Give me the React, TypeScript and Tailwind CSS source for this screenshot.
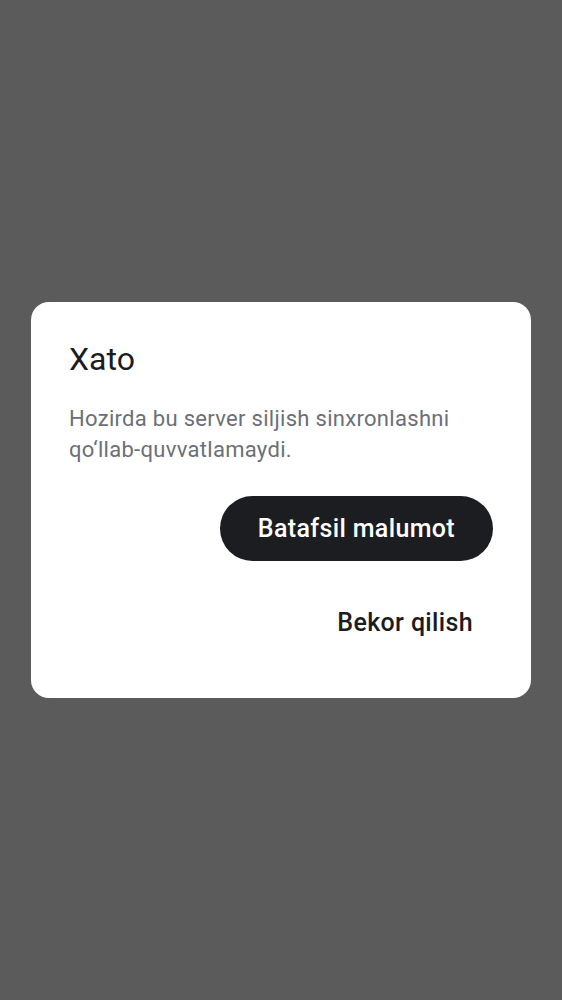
export default function App() {
  return (
    <div
      className="flex h-[1000px] w-full items-start justify-center bg-[#5b5b5b] pt-[302px]"
      style={{ fontFamily: "Roboto, 'Noto Sans', sans-serif" }}
    >
      <div className="w-[500px] rounded-[18px] bg-white px-[38px] pt-[37px] pb-[43px]">
        <h2 className="text-[32px] leading-[40px] text-[#1b1c20]">Xato</h2>

        <p className="mt-[24px] text-[22px] leading-[31px] tracking-[0.3px] text-[#6b6f77]">
          Hozirda bu server siljish sinxronlashni qo‘llab-quvvatlamaydi.
        </p>

        <div className="mt-[31px] flex flex-col items-end gap-[29px]">
          <button className="h-[65px] rounded-full bg-[#1c1d21] px-[38px] text-[25px] font-medium tracking-[0.35px] text-white">
            Batafsil malumot
          </button>
          <button className="h-[65px] px-[20px] text-[25px] font-medium tracking-[0.35px] text-[#1b1c20]">
            Bekor qilish
          </button>
        </div>
      </div>
    </div>
  );
}
